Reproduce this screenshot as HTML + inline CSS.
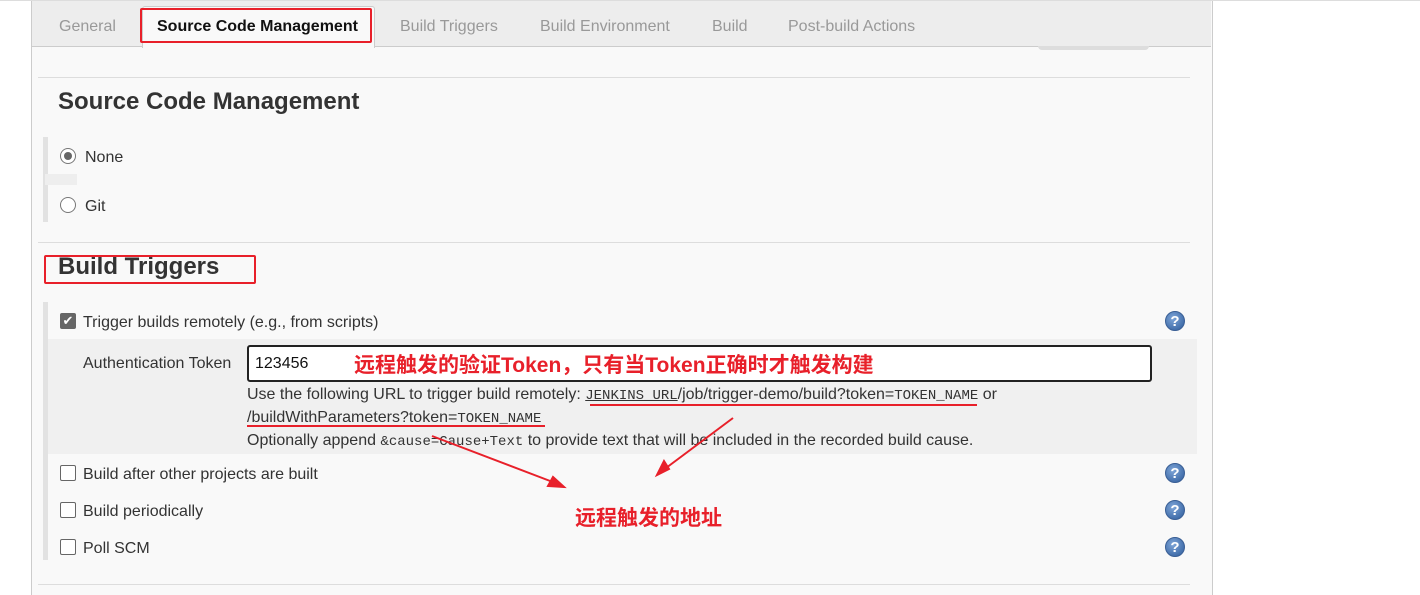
<!DOCTYPE html><html><head><style>
body{margin:0;width:1420px;height:595px;background:#fff;position:relative;overflow:hidden;font-family:"Liberation Sans",Arial,"Noto Sans CJK SC",sans-serif;color:#333}
.a{position:absolute}
.t{font-size:16px;color:#999;top:17px}
.cb{position:absolute;width:14px;height:14px;border:1px solid #666;border-radius:2px;background:#fff}
.help{position:absolute;width:20px;height:20px;border-radius:50%;background:radial-gradient(circle at 40% 35%,#7fa6d8,#2c5a9a);color:#fff;font:bold 15px "Liberation Sans";text-align:center;line-height:20px;border:1px solid #3a5f95;box-sizing:border-box}
.lbl{font-size:16px;color:#333}
.mono{font-family:"Liberation Mono",monospace;font-size:14px}
.red{color:#e8202a;font-weight:bold;font-size:21px;font-family:"Liberation Sans","Noto Sans CJK SC",sans-serif}
</style></head><body>
<div class="a" style="left:0;top:0;width:1420px;height:1px;background:#ddd"></div>
<div class="a" style="left:31px;top:1px;width:1180px;height:594px;background:#f9f9f9;border-left:1px solid #ccc;border-right:1px solid #ccc"></div>
<div class="a" style="left:32px;top:1px;width:1179px;height:45px;background:#ededed;border-bottom:1px solid #ccc"></div>
<div class="a" style="left:142px;top:6px;width:231px;height:41px;background:#f9f9f9;border:1px solid #ccc;border-bottom:none;border-radius:3px 3px 0 0"></div>
<div class="a" style="left:1038px;top:46px;width:111px;height:4px;background:#ddd;border-radius:0 0 4px 4px"></div>
<div class="a t" style="left:59px;top:18px">General</div>
<div class="a" style="left:157px;top:18px;font-size:16px;color:#111;font-weight:bold">Source Code Management</div>
<div class="a" style="left:140px;top:8px;width:228px;height:31px;border:2px solid #e8202a;border-radius:2px"></div>
<div class="a t" style="left:400px;top:18px">Build Triggers</div>
<div class="a t" style="left:540px;top:18px">Build Environment</div>
<div class="a t" style="left:712px;top:18px">Build</div>
<div class="a t" style="left:788px;top:18px">Post-build Actions</div>
<div class="a" style="left:38px;top:77px;width:1152px;height:1px;background:#ddd"></div>
<div class="a" style="left:58px;top:88px;font-size:24px;font-weight:bold;color:#333">Source Code Management</div>
<div class="a" style="left:43px;top:137px;width:5px;height:85px;background:#e2e2e2"></div>
<div class="a" style="left:45px;top:174px;width:32px;height:11px;background:#eee"></div>
<div class="a" style="left:60px;top:148px;width:14px;height:14px;border:1px solid #777;border-radius:50%;background:#fff"></div>
<div class="a" style="left:64px;top:152px;width:8px;height:8px;border-radius:50%;background:#666"></div>
<div class="a lbl" style="left:85px;top:149px">None</div>
<div class="a" style="left:60px;top:197px;width:14px;height:14px;border:1px solid #777;border-radius:50%;background:#fff"></div>
<div class="a lbl" style="left:85px;top:198px">Git</div>
<div class="a" style="left:38px;top:242px;width:1152px;height:1px;background:#ddd"></div>
<div class="a" style="left:58px;top:253px;font-size:24px;font-weight:bold;color:#333">Build Triggers</div>
<div class="a" style="left:44px;top:255px;width:208px;height:25px;border:2px solid #e8202a;border-radius:2px"></div>
<div class="a" style="left:43px;top:302px;width:5px;height:258px;background:#e2e2e2"></div>
<div class="a" style="left:48px;top:339px;width:1149px;height:115px;background:#f0f0f0"></div>
<div class="a" style="left:60px;top:313px;width:16px;height:16px;background:#666;border-radius:2px;color:#fff;font-size:13px;line-height:16px;text-align:center">✔</div>
<div class="a lbl" style="left:83px;top:314px">Trigger builds remotely (e.g., from scripts)</div>
<div class="a lbl" style="left:83px;top:355px">Authentication Token</div>
<div class="a" style="left:247px;top:345px;width:901px;height:33px;border:2px solid #222;border-radius:3px;background:#fff"></div>
<div class="a lbl" style="left:255px;top:355px;color:#111">123456</div>
<div class="a red" style="left:354px;top:349px">远程触发的验证Token，只有当Token正确时才触发构建</div>
<div class="a" style="left:247px;top:384px;font-size:16px;color:#333;line-height:22px">Use the following URL to trigger build remotely: <span class="mono" style="text-decoration:underline">JENKINS_URL</span>/job/trigger-demo/build?token=<span class="mono">TOKEN_NAME</span> or<br>/buildWithParameters?token=<span class="mono">TOKEN_NAME</span><br>Optionally append <span class="mono">&amp;cause=Cause+Text</span> to provide text that will be included in the recorded build cause.</div>
<div class="a" style="left:590px;top:404px;width:387px;height:2px;background:#e8202a"></div>
<div class="a" style="left:247px;top:425px;width:298px;height:2px;background:#e8202a"></div>
<svg class="a" style="left:0;top:0" width="1420" height="595"><g stroke="#e8202a" stroke-width="2" fill="#e8202a"><line x1="432" y1="436" x2="558" y2="484"/><polygon points="564,487 548,486 553,477"/><line x1="733" y1="418" x2="662" y2="471"/><polygon points="657,475 664,461 669,469"/></g></svg>
<div class="cb" style="left:60px;top:465px"></div><div class="a lbl" style="left:83px;top:466px">Build after other projects are built</div>
<div class="cb" style="left:60px;top:502px"></div><div class="a lbl" style="left:83px;top:503px">Build periodically</div>
<div class="cb" style="left:60px;top:539px"></div><div class="a lbl" style="left:83px;top:540px">Poll SCM</div>
<div class="a red" style="left:575px;top:502px">远程触发的地址</div>
<div class="help" style="left:1165px;top:311px">?</div>
<div class="help" style="left:1165px;top:463px">?</div>
<div class="help" style="left:1165px;top:500px">?</div>
<div class="help" style="left:1165px;top:537px">?</div>
<div class="a" style="left:38px;top:584px;width:1152px;height:1px;background:#ddd"></div>
</body></html>
